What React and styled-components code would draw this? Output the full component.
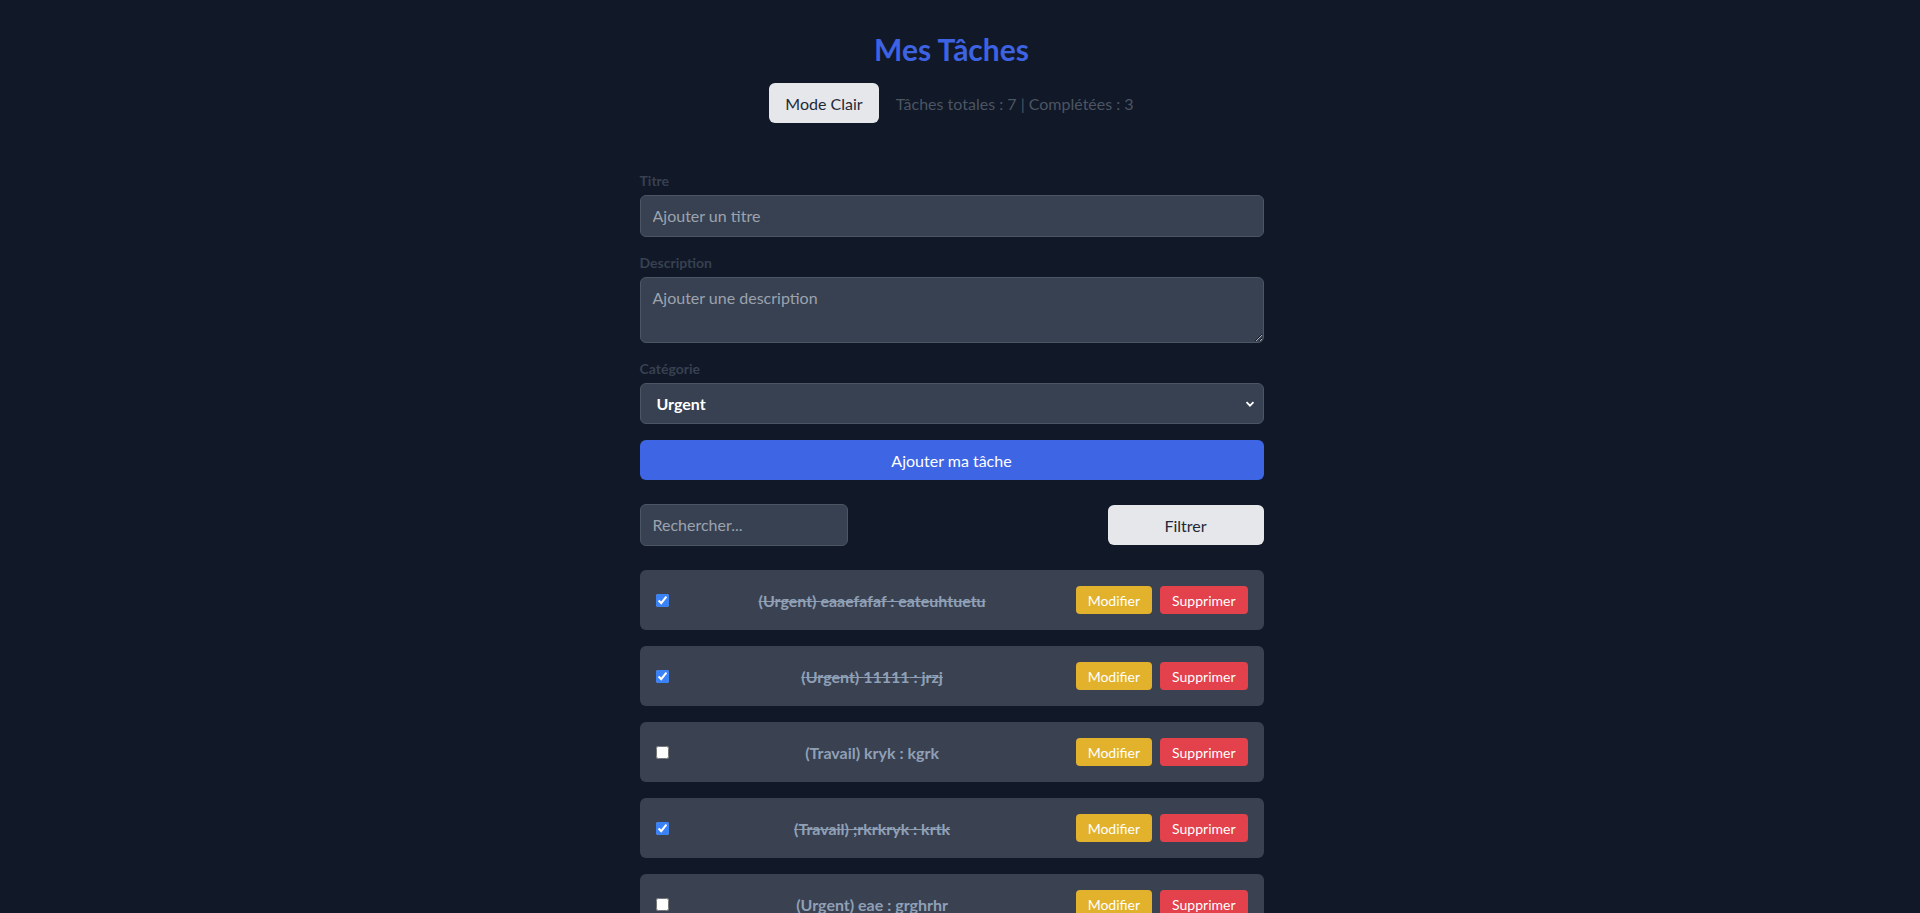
import React, { useState } from "react";
import styled, { createGlobalStyle } from "styled-components";

const GlobalStyle = createGlobalStyle`
  * { box-sizing: border-box; }
  body {
    margin: 0;
    background: #111827;
    font-family: Lato, "Open Sans", sans-serif;
    color: #e5e7eb;
  }
`;

// right padding leaves room where the browser's scrollbar sits in the original
const Page = styled.div`
  min-height: 100vh;
  padding: 31px 33px 40px 16px;
`;

const Container = styled.div`
  width: 624px;
  margin: 0 auto;
`;

const Title = styled.h1`
  margin: 0 0 16px;
  text-align: center;
  font-size: 30px;
  line-height: 36px;
  font-weight: 700;
  color: #3d63e3;
`;

const TopBar = styled.div`
  display: flex;
  justify-content: center;
  align-items: center;
  gap: 17px;
`;

const LightButton = styled.button`
  height: 40px;
  width: ${(p) => p.$width || "auto"};
  padding: 0 16px;
  border: none;
  border-radius: 6px;
  background: #e5e7eb;
  color: #1f2937;
  font-family: inherit;
  font-size: 16px;
  cursor: pointer;
`;

const Stats = styled.span`
  color: #4b5563;
  font-size: 16px;
`;

const Form = styled.form`
  margin-top: 48px;
  display: flex;
  flex-direction: column;
`;

const Field = styled.div`
  display: flex;
  flex-direction: column;
  gap: 4px;
  margin-bottom: 16px;
`;

const Label = styled.label`
  font-size: 14px;
  line-height: 20px;
  font-weight: 700;
  color: #374151;
`;

const inputBase = `
  width: 100%;
  background: #374151;
  border: 1px solid #4b5563;
  border-radius: 6px;
  color: #f3f4f6;
  font-family: inherit;
  font-size: 16px;
  line-height: 24px;
  padding: 8px 12px;
  outline: none;
  &::placeholder { color: #9ca3af; }
`;

const Input = styled.input`
  ${inputBase}
  width: ${(p) => p.$width || "100%"};
`;

const TextArea = styled.textarea`
  ${inputBase}
  height: 66px;
  resize: vertical;
  display: block;
`;

const Select = styled.select`
  ${inputBase}
  height: 41px;
  padding: 6px 16px;
  font-weight: 700;
  color: #ffffff;
  appearance: none;
  background-image: url("data:image/svg+xml;utf8,<svg xmlns='http://www.w3.org/2000/svg' width='10' height='10' viewBox='0 0 10 10'><path d='M1.5 3.2 5 6.7 8.5 3.2' fill='none' stroke='white' stroke-width='1.8'/></svg>");
  background-repeat: no-repeat;
  background-position: right 8px center;
`;

const PrimaryButton = styled.button`
  height: 40px;
  width: 100%;
  border: none;
  border-radius: 6px;
  background: #3d65e4;
  color: #ffffff;
  font-family: inherit;
  font-size: 16px;
  cursor: pointer;
`;

const SearchRow = styled.div`
  margin-top: 24px;
  display: flex;
  justify-content: space-between;
  align-items: center;
`;

const TaskList = styled.ul`
  list-style: none;
  margin: 24px 0 0;
  padding: 0;
  display: flex;
  flex-direction: column;
  gap: 16px;
`;

const TaskCard = styled.li`
  height: 60px;
  display: flex;
  align-items: center;
  gap: 12px;
  padding: 0 16px;
  background: #3a4151;
  border-radius: 6px;
`;

const Check = styled.input`
  width: 13px;
  height: 13px;
  margin: 0;
  accent-color: #3b82f6;
`;

const TaskText = styled.span`
  flex: 1;
  text-align: center;
  font-size: 16px;
  font-weight: 700;
  color: #8fa0b6;
  text-decoration: ${(p) => (p.$done ? "line-through" : "none")};
`;

const Actions = styled.div`
  display: flex;
  gap: 8px;
`;

const SmallButton = styled.button`
  height: 28px;
  padding: 0 12px;
  border: none;
  border-radius: 4px;
  background: ${(p) => p.$bg};
  color: #ffffff;
  font-family: inherit;
  font-size: 14px;
  cursor: pointer;
`;

const initialTasks = [
  { id: 1, cat: "Urgent", title: "eaaefafaf", desc: "eateuhtuetu", done: true },
  { id: 2, cat: "Urgent", title: "11111", desc: "jrzj", done: true },
  { id: 3, cat: "Travail", title: "kryk", desc: "kgrk", done: false },
  { id: 4, cat: "Travail", title: ";rkrkryk", desc: "krtk", done: true },
  { id: 5, cat: "Urgent", title: "eae", desc: "grghrhr", done: false },
  { id: 6, cat: "Personnel", title: "courses", desc: "pain", done: false },
  { id: 7, cat: "Travail", title: "rapport", desc: "finir", done: false },
];

export default function App() {
  const [tasks, setTasks] = useState(initialTasks);
  const done = tasks.filter((t) => t.done).length;

  const toggle = (id) =>
    setTasks(tasks.map((t) => (t.id === id ? { ...t, done: !t.done } : t)));
  const remove = (id) => setTasks(tasks.filter((t) => t.id !== id));

  return (
    <Page>
      <GlobalStyle />
      <Container>
        <Title>Mes Tâches</Title>
        <TopBar>
          <LightButton>Mode Clair</LightButton>
          <Stats>
            Tâches totales : {tasks.length} | Complétées : {done}
          </Stats>
        </TopBar>

        <Form onSubmit={(e) => e.preventDefault()}>
          <Field>
            <Label>Titre</Label>
            <Input placeholder="Ajouter un titre" />
          </Field>
          <Field>
            <Label>Description</Label>
            <TextArea placeholder="Ajouter une description" />
          </Field>
          <Field>
            <Label>Catégorie</Label>
            <Select defaultValue="Urgent">
              <option>Urgent</option>
              <option>Travail</option>
              <option>Personnel</option>
            </Select>
          </Field>
          <PrimaryButton type="submit">Ajouter ma tâche</PrimaryButton>
        </Form>

        <SearchRow>
          <Input $width="208px" placeholder="Rechercher..." />
          <LightButton $width="156px">Filtrer</LightButton>
        </SearchRow>

        <TaskList>
          {tasks.map((t) => (
            <TaskCard key={t.id}>
              <Check type="checkbox" checked={t.done} onChange={() => toggle(t.id)} />
              <TaskText $done={t.done}>
                ({t.cat}) {t.title} : {t.desc}
              </TaskText>
              <Actions>
                <SmallButton $bg="#e2b22c">Modifier</SmallButton>
                <SmallButton $bg="#e3414b" onClick={() => remove(t.id)}>
                  Supprimer
                </SmallButton>
              </Actions>
            </TaskCard>
          ))}
        </TaskList>
      </Container>
    </Page>
  );
}
